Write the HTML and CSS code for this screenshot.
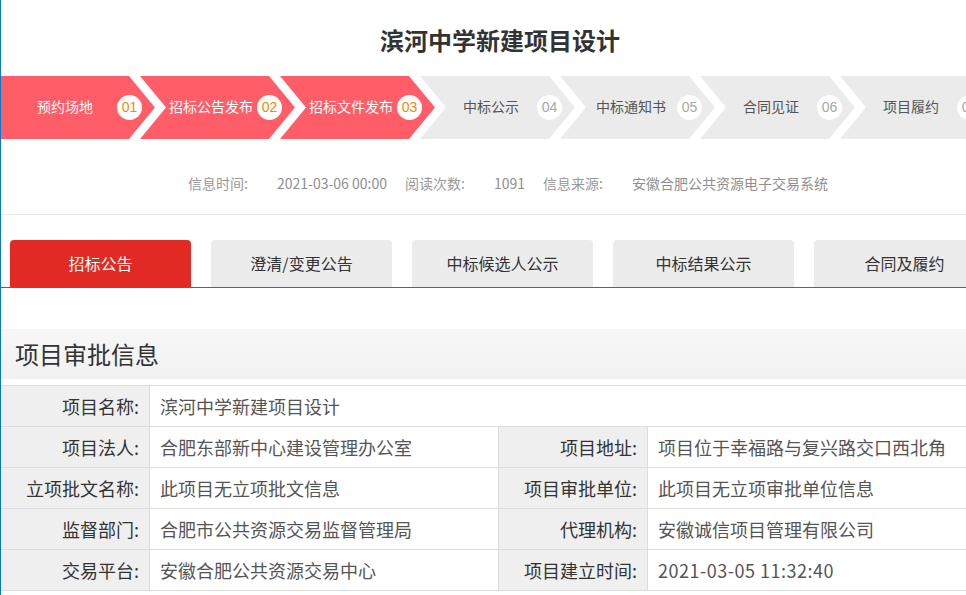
FILE: index.html
```html
<!DOCTYPE html>
<html lang="zh-CN">
<head>
<meta charset="utf-8">
<title>滨河中学新建项目设计</title>
<link rel="stylesheet" href="styles.css">
</head>
<body>
<div class="page">
  <h1 class="title">滨河中学新建项目设计</h1>

  <ol class="steps">
    <li class="step done first"><span class="step-label">预约场地</span><span class="step-num">01</span></li>
    <li class="step done"><span class="step-label">招标公告发布</span><span class="step-num">02</span></li>
    <li class="step done"><span class="step-label">招标文件发布</span><span class="step-num">03</span></li>
    <li class="step"><span class="step-label">中标公示</span><span class="step-num">04</span></li>
    <li class="step"><span class="step-label">中标通知书</span><span class="step-num">05</span></li>
    <li class="step"><span class="step-label">合同见证</span><span class="step-num">06</span></li>
    <li class="step"><span class="step-label">项目履约</span><span class="step-num">07</span></li>
  </ol>

  <div class="meta">
    <span class="meta-label">信息时间:</span><span class="meta-value">2021-03-06 00:00</span>
    <span class="meta-label">阅读次数:</span><span class="meta-value">1091</span>
    <span class="meta-label">信息来源:</span><span class="meta-value">安徽合肥公共资源电子交易系统</span>
  </div>

  <div class="tabs">
    <a class="tab active">招标公告</a>
    <a class="tab">澄清/变更公告</a>
    <a class="tab">中标候选人公示</a>
    <a class="tab">中标结果公示</a>
    <a class="tab">合同及履约</a>
  </div>

  <section class="approval">
    <h2 class="section-title">项目审批信息</h2>
    <table class="info">
      <colgroup>
        <col class="c-label"><col class="c-value"><col class="c-label"><col class="c-value2">
      </colgroup>
      <tr>
        <th>项目名称:</th><td colspan="3">滨河中学新建项目设计</td>
      </tr>
      <tr>
        <th>项目法人:</th><td>合肥东部新中心建设管理办公室</td>
        <th>项目地址:</th><td>项目位于幸福路与复兴路交口西北角</td>
      </tr>
      <tr>
        <th>立项批文名称:</th><td>此项目无立项批文信息</td>
        <th>项目审批单位:</th><td>此项目无立项审批单位信息</td>
      </tr>
      <tr>
        <th>监督部门:</th><td>合肥市公共资源交易监督管理局</td>
        <th>代理机构:</th><td>安徽诚信项目管理有限公司</td>
      </tr>
      <tr>
        <th>交易平台:</th><td>安徽合肥公共资源交易中心</td>
        <th>项目建立时间:</th><td class="num">2021-03-05 11:32:40</td>
      </tr>
    </table>
  </section>
</div>
</body>
</html>
```

FILE: styles.css
```css
html {
  overflow: hidden;
}
body {
  margin: 0;
  background: #fff;
  font-family: "Microsoft YaHei", "Noto Sans CJK SC", "Noto Sans", sans-serif;
  color: #333;
}
body::before {
  content: "";
  position: fixed;
  left: 0;
  top: 0;
  bottom: 0;
  width: 1px;
  background: #0a78c8;
  z-index: 10;
}
.page {
  width: 1000px;
}
.title {
  margin: 0;
  padding-top: 4px;
  height: 72px;
  line-height: 72px;
  text-align: center;
  font-size: 24px;
  font-weight: bold;
  color: #333;
}

/* steps */
.steps {
  list-style: none;
  margin: 0;
  padding: 0;
  display: flex;
  height: 63px;
}
.step {
  flex: 0 0 155px;
  margin-right: -15px;
  height: 63px;
  display: flex;
  align-items: center;
  padding-left: 26px;
  box-sizing: border-box;
  background: #ebebeb;
  color: #555;
  font-size: 14px;
  clip-path: polygon(0 0, 129px 0, 155px 50%, 129px 100%, 0 100%, 26px 50%);
}
.step.first {
  padding-left: 20px;
  clip-path: polygon(0 0, 129px 0, 155px 50%, 129px 100%, 0 100%);
}
.step.done {
  background: #ff5e69;
  color: #fff;
}
.step-label {
  width: 90px;
  text-align: center;
  white-space: nowrap;
  margin-top: -3px;
}
.step-num {
  width: 25px;
  height: 25px;
  margin-left: 1px;
  border-radius: 50%;
  background: #fff;
  color: #a8a8a8;
  font-size: 14px;
  line-height: 25px;
  text-align: center;
  font-family: "Liberation Sans", Arial, sans-serif;
}
.step.first .step-num {
  margin-left: 7px;
}
.step.done .step-num {
  color: #f08a00;
}

/* meta */
.meta {
  padding: 34px 0 21px 16px;
  line-height: 20px;
  font-size: 14px;
  color: #999;
  display: flex;
  justify-content: center;
  border-bottom: 1px solid #e8e8e8;
}
.meta-label {
  margin-right: 29px;
}
.meta-value {
  margin-right: 18px;
  color: #8f8f8f;
}
.meta-value:last-child {
  margin-right: 0;
}

/* tabs */
.tabs {
  margin-top: 25px;
  padding-left: 10px;
  display: flex;
  gap: 20px;
  border-bottom: 1px solid #d9302a;
}
.tab {
  width: 181px;
  height: 47px;
  line-height: 47px;
  text-align: center;
  font-size: 16px;
  color: #333;
  background: #ececec;
  border-radius: 4px 4px 0 0;
}
.tab.active {
  background: #e12a24;
  color: #fff;
}

/* approval */
.approval {
  margin-top: 41px;
}
.section-title {
  margin: 0;
  height: 50px;
  line-height: 50px;
  padding-left: 15px;
  font-size: 24px;
  font-weight: normal;
  color: #333;
  background: linear-gradient(#f7f7f7, #f1f1f1);
}
.info {
  margin-top: 6px;
  width: 1000px;
  table-layout: fixed;
  border-collapse: collapse;
  font-size: 18px;
}
.c-label { width: 149px; }
.c-value { width: 349px; }
.c-value2 { width: 353px; }
.info th,
.info td {
  height: 40px;
  padding: 0 10px;
  border: 1px solid #dddddd;
  white-space: nowrap;
  line-height: 24px;
}
.info th {
  background: #efefef;
  text-align: right;
  font-weight: normal;
  color: #333;
  padding-right: 10px;
}
.info td {
  text-align: left;
  color: #555;
}
.info td.num {
  letter-spacing: 0.5px;
}
```
